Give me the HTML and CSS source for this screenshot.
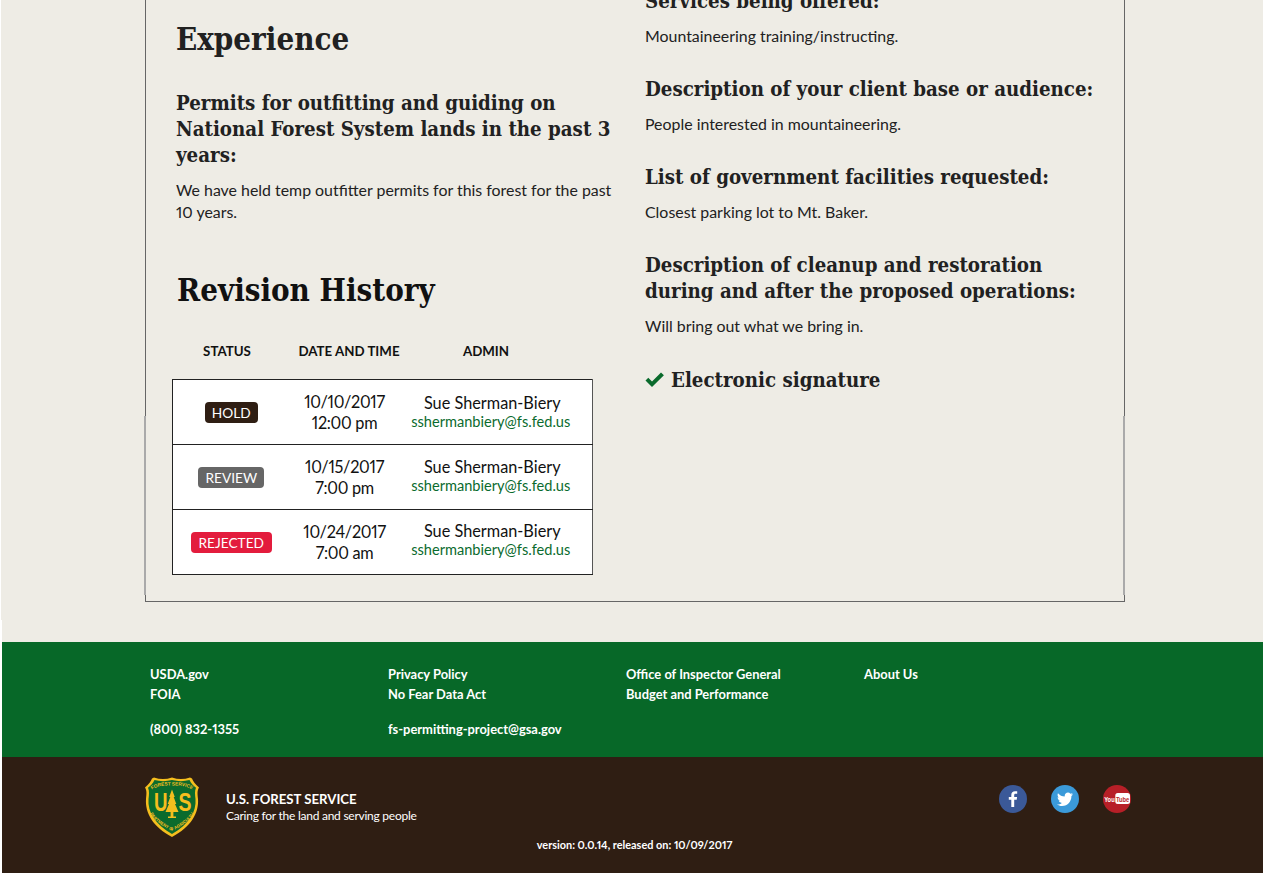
FILE: index.html
```html
<!DOCTYPE html>
<html lang="en">
<head>
<meta charset="utf-8">
<title>Permit application</title>
<link rel="stylesheet" href="styles.css">
</head>
<body>
<div class="page">
  <main class="sheet">
    <section class="col col-left">
      <h2 class="section-title">Experience</h2>
      <h3 class="q">Permits for outfitting and guiding on National Forest System lands in the past 3 years:</h3>
      <p class="a">We have held temp outfitter permits for this forest for the past 10 years.</p>
      <h2 class="history-title">Revision History</h2>
      <div class="history-head">
        <span>STATUS</span><span>DATE AND TIME</span><span>ADMIN</span>
      </div>
      <table class="history">
        <tr>
          <td class="c-status"><span class="badge hold">HOLD</span></td>
          <td class="c-date">10/10/2017<br>12:00 pm</td>
          <td class="c-admin"><span class="name">Sue Sherman-Biery</span><a class="mail">sshermanbiery@fs.fed.us</a></td>
        </tr>
        <tr>
          <td class="c-status"><span class="badge review">REVIEW</span></td>
          <td class="c-date">10/15/2017<br>7:00 pm</td>
          <td class="c-admin"><span class="name">Sue Sherman-Biery</span><a class="mail">sshermanbiery@fs.fed.us</a></td>
        </tr>
        <tr>
          <td class="c-status"><span class="badge rejected">REJECTED</span></td>
          <td class="c-date">10/24/2017<br>7:00 am</td>
          <td class="c-admin"><span class="name">Sue Sherman-Biery</span><a class="mail">sshermanbiery@fs.fed.us</a></td>
        </tr>
      </table>
    </section>
    <section class="col col-right">
      <h3 class="q">Services being offered:</h3>
      <p class="a">Mountaineering training/instructing.</p>
      <h3 class="q">Description of your client base or audience:</h3>
      <p class="a">People interested in mountaineering.</p>
      <h3 class="q">List of government facilities requested:</h3>
      <p class="a">Closest parking lot to Mt. Baker.</p>
      <h3 class="q">Description of cleanup and restoration during and after the proposed operations:</h3>
      <p class="a">Will bring out what we bring in.</p>
      <h3 class="q signature">
        <svg class="check" viewBox="0 0 20 16" aria-hidden="true"><path d="M.5 8.500 3.300 5.700 7 9.400 16 .4 18.900 3.200 7 15.100Z"/></svg>
        Electronic signature
      </h3>
    </section>
  </main>
  <footer>
    <div class="links">
      <ul>
        <li>USDA.gov</li><li>FOIA</li><li class="contact">(800) 832-1355</li>
      </ul>
      <ul>
        <li>Privacy Policy</li><li>No Fear Data Act</li><li class="contact">fs-permitting-project@gsa.gov</li>
      </ul>
      <ul>
        <li>Office of Inspector General</li><li>Budget and Performance</li>
      </ul>
      <ul>
        <li>About Us</li>
      </ul>
    </div>
    <div class="brand">
      <div class="brand-row">
        <svg class="shield" viewBox="0 0 54 60" aria-hidden="true">
          <path d="M9 .5C15 2.5 21 2.5 27 .5C33 2.5 39 2.5 45 .5L47 1.5C48 4 50 7 54 10.5C52 14 52.5 17 53 22C54 36 46 50 27 60C8 50 0 36 1 22C1.500 17 2 14 0 10.500C4 7 6 4 7 1.500Z" fill="#f5be1e"/>
          <path d="M9.500 3C15 4.500 21 4.500 27 3C33 4.500 39 4.500 44.500 3C46 6 48 8.500 51 10.800C49.500 14 50 18 50.500 22C51.500 35 44 47 27 57C10 47 2.500 35 3.500 22C4 18 4.500 14 3 10.800C6 8.500 8 6 9.500 3Z" fill="#0b6b2d"/>
          <path d="M27 12.500L29.800 20H28.700L31.300 27H30L33.500 35H28.400V39.500H31V41H23V39.500H25.600V35H20.500L24 27H22.700L25.300 20H24.200Z" fill="#f5be1e"/>
          <text x="9" y="34" class="shield-us" textLength="13.500" lengthAdjust="spacingAndGlyphs">U</text>
          <text x="33.500" y="34" class="shield-us" textLength="13" lengthAdjust="spacingAndGlyphs">S</text>
          <defs>
            <path id="arc-top" d="M7 12.500C15 8 21 8.500 27 8.500C33 8.500 39 8 47 12.500"/>
            <path id="arc-bottom" d="M4.500 35.500C8 43 16 48.500 27 54C38 48.500 46 43 49.500 35.500"/>
          </defs>
          <text class="shield-small"><textPath href="#arc-top" startOffset="50%">FOREST SERVICE</textPath></text>
          <text class="shield-tiny"><textPath href="#arc-bottom" startOffset="50%">DEPARTMENT OF AGRICULTURE</textPath></text>
        </svg>
        <div class="brand-text">
          <strong>U.S. FOREST SERVICE</strong>
          <span>Caring for the land and serving people</span>
        </div>
        <div class="social">
          <svg class="soc" viewBox="0 0 28 28" aria-hidden="true"><circle cx="14" cy="14" r="14" fill="#3b5998"/><path d="M15.200 22V14.800H17.700L18.100 12H15.200V10.200C15.200 9.400 15.500 8.800 16.600 8.800H18.200V6.300C17.900 6.300 17 6.200 16 6.200C13.800 6.200 12.300 7.500 12.300 9.900V12H9.800V14.800H12.300V22Z" fill="#fff"/></svg>
          <svg class="soc" viewBox="0 0 28 28" aria-hidden="true"><circle cx="14" cy="14" r="14" fill="#3b9ad9"/><path d="M22 9.200C21.400 9.500 20.800 9.600 20.100 9.700C20.800 9.300 21.300 8.700 21.600 7.900C20.900 8.300 20.200 8.600 19.400 8.700C18.800 8 17.900 7.600 17 7.600C15.200 7.600 13.700 9.100 13.700 10.900C13.700 11.200 13.700 11.400 13.800 11.600C11.100 11.500 8.600 10.200 7 8.200C6.700 8.700 6.600 9.300 6.600 9.900C6.600 11 7.200 12 8 12.600C7.500 12.600 7 12.400 6.600 12.200C6.600 13.800 7.700 15.200 9.200 15.500C8.700 15.600 8.200 15.700 7.700 15.600C8.100 16.900 9.300 17.900 10.800 17.900C9.400 19 7.700 19.600 5.900 19.400C7.400 20.300 9.100 20.900 11 20.900C17 20.900 20.400 15.800 20.400 11.400V11C21 10.500 21.600 9.900 22 9.200Z" fill="#fff"/></svg>
          <svg class="soc" viewBox="0 0 28 28" aria-hidden="true"><circle cx="14" cy="14" r="14" fill="#b71f27"/><rect x="12.300" y="8" width="14.700" height="11" rx="2.500" fill="#fff"/><text x="1.200" y="17" class="yt-you" textLength="10.500" lengthAdjust="spacingAndGlyphs">You</text><text x="13" y="17" class="yt-tube" textLength="13.300" lengthAdjust="spacingAndGlyphs">Tube</text></svg>
        </div>
      </div>
      <p class="version">version: 0.0.14, released on: 10/09/2017</p>
    </div>
  </footer>
</div>
</body>
</html>
```

FILE: styles.css
```css
* { box-sizing: border-box; }
html, body { margin: 0; padding: 0; }
body {
  background: #fff;
  font-family: "Lato", "Noto Sans", sans-serif;
  font-variant-numeric: proportional-nums;
  color: #212121;
  overflow: hidden;
}
.page {
  position: relative;
  height: 873px;
  margin-left: 2px;
  background: #eeece5;
  display: flex;
  flex-direction: column;
}
.page::before {
  content: "";
  position: absolute;
  left: -1px;
  top: 0;
  width: 1px;
  height: 620px;
  background: #eeece5;
}
.sheet {
  position: relative;
  width: 980px;
  height: 602px;
  margin-left: 143px;
  margin-bottom: 40px;
  flex: none;
  border: 1px solid #666;
  border-top: 0;
  display: grid;
  grid-template-columns: 469px 1fr;
  padding-left: 30px;
}
.sheet::before,
.sheet::after {
  content: "";
  position: absolute;
  top: 416px;
  height: 179px;
  width: 2px;
  background: #aaa;
}
.sheet::before { left: -2px; }
.sheet::after { right: -1px; }
.col-left { width: 442px; }
.col-right { margin-top: -12px; max-width: 460px; }

h2, h3, p { margin: 0; }
.section-title {
  font: bold 31px/40px "DejaVu Serif", serif;
  font-stretch: condensed;
  margin: 19px 0 31px;
  color: #212121;
}
.q {
  font: bold 20.300px/26px "DejaVu Serif", serif;
  font-stretch: condensed;
  color: #212121;
  margin-bottom: 11px;
}
.a {
  font-size: 15.900px;
  line-height: 22px;
  color: #212121;
  margin-bottom: 29px;
}
.col-left .a { margin-bottom: 45px; }
.history-title {
  font: bold 31px/44px "DejaVu Serif", serif;
  font-stretch: condensed;
  color: #111;
  margin-bottom: 30px;
  padding-left: 1px;
}
.history-head {
  display: grid;
  grid-template-columns: 110px 134px 140px;
  margin-left: -4px;
  width: 421px;
  text-align: center;
  font-size: 13.300px;
  font-weight: 700;
  line-height: 18px;
  color: #111;
  margin-bottom: 19px;
}
.history {
  margin-left: -4px;
  width: 421px;
  border-collapse: collapse;
  background: #fff;
  table-layout: fixed;
}
.history td {
  border: 1px solid #222;
  border-left: 0;
  border-right: 0;
  height: 65px;
  padding: 0;
  text-align: center;
  vertical-align: middle;
  color: #111;
  font-size: 16.300px;
  line-height: 21px;
}
.history td:first-child { border-left: 1px solid #222; padding-right: 1px; }
.history td:last-child { border-right: 1px solid #555; padding: 0 9px 1px 0; }
.history tr:nth-child(2) td:last-child { padding-bottom: 3px; }
.history tr:nth-child(3) td:last-child { padding-bottom: 5px; }
.history .c-date { width: 108px; letter-spacing: -0.300px; }
.c-status { width: 118px; }
.badge {
  display: inline-block;
  color: #fff;
  font-size: 13.700px;
  line-height: 21px;
  padding: 0 7px;
  border-radius: 4px;
}
.hold { background: #2f1e13; }
.review { background: #666; }
.rejected { background: #e31c3d; padding: 0 8px; }
.name, .mail { display: block; }
.name { padding-left: 3px; }
.mail { color: #0a6b2e; font-size: 14.600px; line-height: 18px; }

.signature { display: flex; align-items: center; gap: 6px; margin-top: 30px; }
.col-right .a:nth-last-of-type(1) { margin-bottom: 0; }
.check { width: 20px; height: 16px; fill: #0a6a2c; flex: none; }

footer { flex: 1; display: flex; flex-direction: column; color: #fff; }
.links {
  background: #076828;
  height: 115px;
  flex: none;
  padding: 22px 0 0 148px;
  display: grid;
  grid-template-columns: repeat(4, 238px);
  font-size: 12.900px;
  font-weight: 700;
  line-height: 20px;
}
.links ul { list-style: none; margin: 0; padding: 0; }
.contact { margin-top: 15px; }
.brand { flex: 1; background: #2f1e13; padding: 20px 0 0 143px; }
.brand-row { display: flex; align-items: flex-start; height: 60px; }
.shield { width: 54px; height: 60px; flex: none; }
.shield-us { font: bold 25px "Liberation Sans", sans-serif; fill: #f5be1e; }
.shield-small { font: bold 4.800px "Liberation Sans", sans-serif; fill: #f5be1e; text-anchor: middle; }
.shield-tiny { font: bold 4.300px "Liberation Sans Narrow", "Liberation Sans", sans-serif; fill: #f5be1e; text-anchor: middle; }
.brand-text { margin: 14px 0 0 27px; display: flex; flex-direction: column; width: 746px; }
.brand-text strong { font-size: 13.200px; line-height: 16px; }
.brand-text span { font-size: 12px; line-height: 17px; letter-spacing: -0.250px; }
.social { display: flex; gap: 24px; margin: 8px 0 0 27px; }
.soc { width: 28px; height: 28px; flex: none; }
.yt-you { font: bold 8px "Liberation Sans Narrow", "Liberation Sans", sans-serif; fill: #fff; }
.yt-tube { font: bold 8px "Liberation Sans Narrow", "Liberation Sans", sans-serif; fill: #b71f27; }
.version {
  margin: 0;
  font-size: 10.900px;
  line-height: 16px;
  font-weight: 700;
  width: 979px;
  text-align: center;
}
```
